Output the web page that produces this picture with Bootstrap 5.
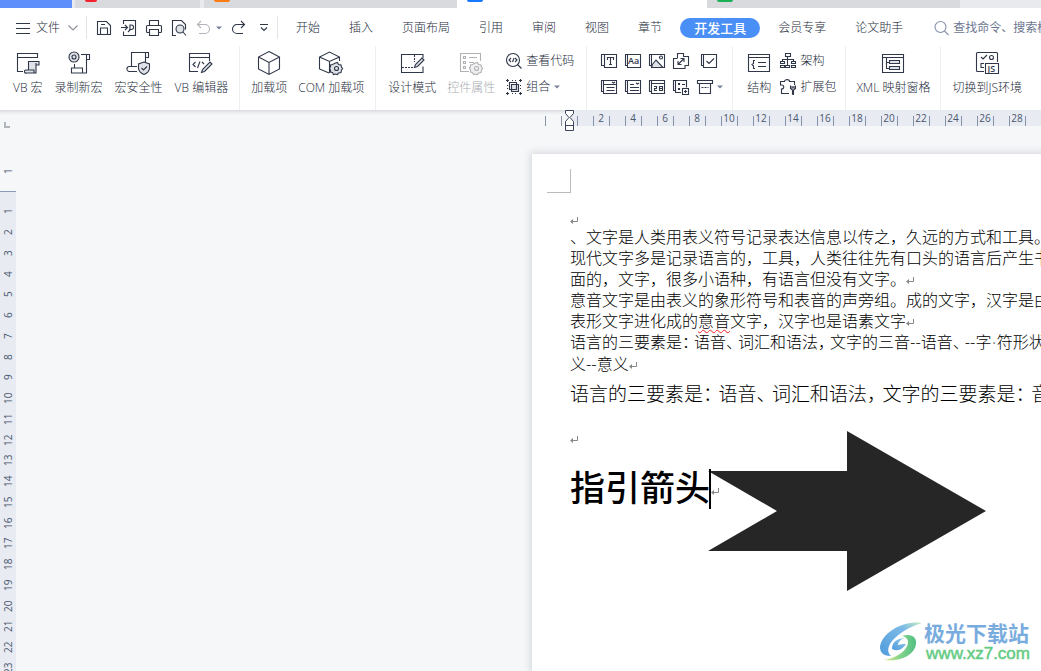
<!DOCTYPE html>
<html lang="zh-CN">
<head>
<meta charset="utf-8">
<meta name="viewport" content="width=device-width, initial-scale=1">
<title>WPS 文字</title>
<link href="https://cdn.jsdelivr.net/npm/bootstrap@5.3.0/dist/css/bootstrap.min.css" rel="stylesheet">
<style>
:root{--ink:#2f3749;--band:#e8ecf2;--desk:#f5f7f9;--line:#e2e4e8}
body{font-family:"Open Sans","Noto Sans CJK SC",sans-serif;font-size:12px;line-height:16px;font-weight:300;color:#262c3c;background:var(--desk);height:100vh}
button{font:inherit;color:inherit;background:none;border:0;padding:0;white-space:nowrap}
svg{display:block;flex:none;overflow:visible}
.ico{fill:none;stroke:var(--ink);stroke-width:1.1}
.ico .fl{fill:#dfe2e7}
.ico text{fill:var(--ink);stroke:none;font-weight:600}
.dim{color:#a8abb1}.dim .ico{stroke:#b0b2b6}.dim .ico .fl{fill:#f0f0f1}
.doc-tabs{height:8px;background:#e9eaed;gap:3px}
.doc-tabs button{background:#d9dade;width:253px;height:8px;padding-left:10px;overflow:hidden}
.doc-tabs .home{background:#5f8ffa;width:72px}
.doc-tabs .short{width:125px;margin-right:1px}
.doc-tabs .current{background:#fff;width:250px;margin:0 -3px}
.app{display:block;width:16px;height:2px;border-radius:0 0 5px 5px;margin-bottom:6px}
.menu-row{height:38px;padding-top:1px}
.quick{gap:9px;padding:0 7px 0 9px}
.bar{width:1px;height:23px;background:var(--line);flex:none}
.menu-tabs{margin-left:3px}
.menu-tabs button{padding:0 14px 0 15px}
.menu-tabs .chosen{background:#4a8ff5;color:#fff;border-radius:10px;height:20px;font-size:13px;font-weight:500;padding:0 14px;margin:0 3px 0 4px}
.finder{border:0;padding:0;outline:0;width:120px;font-size:12px;font-weight:400;color:#6c7690;background:none}
.finder::placeholder{color:#6c7690;opacity:1}
.ribbon{height:64px}
.group{gap:11px;padding:5px 11px 4px;border-right:1px solid #eceef1;flex:none}
.roomy{padding-left:12px;padding-right:12px}
.big{display:flex;flex-direction:column;align-items:center;justify-content:flex-start;gap:5px}
.pair{display:grid;gap:10px;align-content:start}
.pair button{display:flex;align-items:center;gap:4px;height:16px}
.pair{padding-top:2px}
.tools{display:grid;grid-template-columns:repeat(4,16px) auto;gap:10px 8px;align-content:start;padding:2px 0 0 5px}
.tools .end{padding-left:4px}
.side-ruler{width:16px;flex:none;color:#4a566f;font-size:10px;line-height:16px;font-weight:400}
.side-ruler .top-part{height:82px;border-bottom:1px solid #8b9ab5}
.side-ruler .rest{background:var(--band);flex:1;padding-top:9px;overflow:hidden;min-height:0}
.side-ruler span{writing-mode:vertical-rl;transform:rotate(180deg);display:flex;justify-content:center;height:21px;width:16px;flex:none}
.side-ruler span:nth-child(4n){height:20px}
.desk{box-shadow:inset 0 5px 4px -4px #c9ccd1}
.top-ruler{height:16px;margin-left:529px;background:linear-gradient(90deg,transparent 25px,var(--band) 25px);color:#4a566f;font-size:10px;line-height:16px;font-weight:400;overflow:visible}
.top-ruler span{width:16px;flex:none;text-align:center;background:linear-gradient(#8593aa,#8593aa) 0 6px/1px 10px no-repeat}
.indent{left:19px;top:0}
.sheet{margin:28px 0 0 516px;background:#fff;box-shadow:0 0 7px 2px #d9dbde;padding:54px 0 0 38px;min-width:600px;flex:1;color:#000;white-space:nowrap;font-family:"Noto Sans CJK SC",sans-serif}
.sheet p{margin:0;font-size:16px;line-height:21px;font-weight:300}
.sheet .large-text{font-size:19px;line-height:30px;padding-top:4px;margin-bottom:19px}
.sheet h1{margin:12px 0 0;font-size:35px;line-height:52px;font-weight:500}
.nip{font-feature-settings:"halt";margin-right:4px}
.large-text .nip{margin-right:6px}
.gap-dot{font-family:"Liberation Sans",sans-serif;color:#888}
.ret{display:inline-block;width:8px;height:8px;stroke:#888;fill:none}
.typo{text-decoration:underline wavy #e22 1px;text-underline-offset:2px}
.crop{left:15px;top:15px;width:24px;height:24px;border:solid #bbb;border-width:0 1px 1px 0}
.arrow{left:176px;top:277px}
.caret{display:inline-block;width:2px;height:40px;background:#000;vertical-align:-8px;margin-left:-1px}
.brand{right:11px;bottom:8px;gap:2px;font-family:"Noto Sans CJK SC",sans-serif}
.brand b{display:block;font-size:21px;line-height:25px;font-weight:700;color:#79acde}
.brand a{display:block;font:17px/18px "Liberation Sans",sans-serif;color:#65cb83;text-decoration:none;-webkit-text-stroke:.5px #65cb83;padding-left:2px}
</style>
</head>
<body class="d-flex flex-column overflow-hidden position-relative">
<svg width="0" height="0" class="position-absolute" aria-hidden="true">
  <symbol id="ret" viewBox="0 0 8 8"><path d="M7.5 0v4.5H2"/><path d="M0 4.5l3-2.5v5z" fill="#888" stroke="none"/></symbol>
  <symbol id="down" viewBox="0 0 6 4"><path d="M0 .5h6l-3 3z" fill="#77819a" stroke="none"/></symbol>
</svg>

<nav class="doc-tabs d-flex flex-shrink-0" aria-label="文档">
  <button class="home" aria-label="首页"></button>
  <button class="short" aria-label="PDF"><i class="app" style="background:#f5222d;width:12px"></i></button>
  <button aria-label="演示"><i class="app" style="background:#fa7a14"></i></button>
  <button class="current" aria-label="文字"><i class="app" style="background:#1677ff"></i></button>
  <button aria-label="表格"><i class="app" style="background:#1bb155"></i></button>
</nav>

<header class="bg-white flex-shrink-0">
  <div class="menu-row d-flex align-items-center">
    <button class="d-flex align-items-center ps-3 pe-2">
      <svg class="ico me-1" width="16" height="12"><path d="M0 1.500h14M0 6.500h14M0 11.500h14"/></svg>文件
      <svg class="ico ms-2" width="10" height="6" style="stroke:#8a8f99"><path d="M.5 .5l4.500 4.500 4.500-4.500"/></svg>
    </button>
    <span class="bar"></span>
    <div class="quick d-flex align-items-center">
      <button aria-label="保存"><svg class="ico" width="16" height="16"><path d="M1.500 1.500h9l4 4v9h-13zM4.500 14v-6h7v6M5 4.500h4"/></svg></button>
      <button aria-label="输出为PDF"><svg class="ico" width="16" height="16"><path d="M2.500 4V.5h12v15h-12v-4M0 7.500h6M4 5l2.500 2.500L4 10M7 12l2-2V5h1.500a2 2.200 0 0 1 0 4.500H8"/></svg></button>
      <button aria-label="打印"><svg class="ico" width="16" height="16"><path d="M3.500 5V.5h9V5M3.500 12.500H1.500a1 1 0 0 1-1-1v-5a1 1 0 0 1 1-1h13a1 1 0 0 1 1 1v5a1 1 0 0 1-1 1h-2M3.500 9.500h9v6h-9z"/></svg></button>
      <button aria-label="打印预览"><svg class="ico" width="16" height="16"><path d="M5 15.500H1.500V.5h9l4 4v5M12 12l3 3.500"/><circle class="fl" cx="9" cy="9" r="4"/></svg></button>
      <button aria-label="撤销" class="d-flex align-items-center gap-1"><svg class="ico" width="16" height="16" style="stroke:#b0b3b9"><path d="M5 1L1.500 4.500 5 8M2 4.500h7a4.500 4.500 0 0 1 0 9H3"/></svg><svg width="6" height="4"><use href="#down"/></svg></button>
      <button aria-label="恢复"><svg class="ico" width="16" height="16"><path d="M10 1l3.500 3.500L10 8M13 4.500H6a4.500 4.500 0 0 0 0 9h6"/></svg></button>
      <button aria-label="更多" class="ps-1"><svg class="ico" width="10" height="8"><path d="M0 .5h8M1 3.500l3 3 3-3"/></svg></button>
    </div>
    <span class="bar"></span>
    <nav class="menu-tabs d-flex align-items-center">
      <button>开始</button><button>插入</button><button>页面布局</button><button>引用</button><button>审阅</button><button>视图</button><button>章节</button><button class="chosen">开发工具</button><button>会员专享</button><button>论文助手</button>
    </nav>
    <label for="find" class="ms-3"><svg class="ico" width="16" height="16" style="stroke:#8490ac" role="img" aria-label="搜索"><circle cx="7.500" cy="7" r="5.500"/><path d="M11.500 11l4 4"/></svg></label>
    <input id="find" class="finder ms-1" placeholder="查找命令、搜索模板">
  </div>

  <div class="ribbon d-flex">
    <div class="group d-flex" style="padding-left:13px;gap:12px">
      <button class="big"><svg class="ico" width="24" height="24"><path d="M7 20.500H1.500v-18h20V7M1.500 6.500h20"/><path class="fl" d="M12.500 19V10.500h10.500v3.500h-3v8h-9.500a1.500 1.500 0 0 1-1-3h8.500v3M20 14v-2"/></svg><span>VB 宏</span></button>
      <button class="big"><svg class="ico" width="24" height="24"><circle class="fl" cx="7" cy="6" r="5"/><circle class="fl" cx="7" cy="6" r="2"/><path d="M14 3.500h8.500V8.500H19.500v13.500H4.500v-5h11v5M7.500 13v4M19.500 4v4"/></svg><span>录制新宏</span></button>
      <button class="big"><svg class="ico" width="24" height="24"><path d="M10 20.500H3a2 2 0 0 1-1-5h8M4.500 15V1.500h17V6.500H18.500M18.500 2v9"/><path class="fl" d="M17 11l5.500 2v4c0 3-2 5-5.500 6.500-3.500-1.500-5.500-3.500-5.500-6.500v-4z"/><path d="M14.500 17l2 2 3.500-3.500"/></svg><span>宏安全性</span></button>
      <button class="big"><svg class="ico" width="24" height="24"><path d="M9 20.500H.5v-18h20V10M.5 6.500h20M6.500 11L4 13.500 6.500 16M11 10.500L8.500 17M13 11l2 2"/><path class="fl" d="M12.500 21.500l1-3 7.500-7.500 2 2-7.500 7.500z"/></svg><span>VB 编辑器</span></button>
    </div>
    <div class="group d-flex">
      <button class="big"><svg class="ico" width="24" height="24"><path d="M12 .5l10.500 5.500v12L12 23.500 1.500 18V6zM1.500 6L12 11.500 22.500 6M12 11.500v12"/></svg><span>加载项</span></button>
      <button class="big"><svg class="ico" width="24" height="24"><path d="M10 22L.5 18V6L10.500 1l10 5v4M.5 6l10 4.500 10-4.500M10.500 10.500V22"/><path class="fl" d="M16.500 12l2-.5 1 2 2.500.5.500 2 1 1.500-1 1.500-.5 2.500-2.500.5-1 1.500-2-.5-2 .5-1-2-2-.5V19l-1-1.500 1-2V14l2-.5z"/><circle cx="17.500" cy="17.500" r="2"/></svg><span>COM 加载项</span></button>
    </div>
    <div class="group roomy d-flex">
      <button class="big"><svg class="ico" width="24" height="24"><path d="M23 7V3.500H1.500v18H23v-6"/><path d="M2 16.500h13M14.500 4v7" stroke-dasharray="2 1"/><path class="fl" d="M14.500 16.500l1-3L22 7l2 2-6.500 6.500z"/></svg><span>设计模式</span></button>
      <button class="big dim" disabled><svg class="ico" width="24" height="24"><path d="M10 20.500H1.500v-18h20V10M10 6.500h8M10 11.500h5M10 16.500h1"/><path d="M4.500 5.500h2v2h-2zM4.500 10.500h2v2h-2zM4.500 15.500h2v2h-2z"/><path class="fl" d="M16.500 12l2-.5 1 2 2.500.5.500 2 1 1.500-1 1.500-.5 2.500-2.500.5-1 1.500-2-.5-2 .5-1-2-2-.5V19l-1-1.500 1-2V14l2-.5z"/><circle cx="17.500" cy="17.500" r="2"/></svg><span>控件属性</span></button>
      <div class="pair">
        <button><svg class="ico" width="16" height="16"><circle cx="7" cy="7" r="6.500"/><path d="M11.500 11.500l4 4M5 5L3 7l2 2M8 5L6.500 9M9 5l2 2-2 2"/></svg>查看代码</button>
        <button><svg class="ico" width="16" height="16"><path class="fl" d="M5.500 5.500h7v7h-7z"/><path d="M3.500 3.500h7v7h-7z"/><path d="M0 1.500h3M1.500 0v3M13 1.500h3M14.500 0v3M0 14.500h3M1.500 13v3M13 14.500h3M14.500 13v3M6 1.500h1M9 1.500h1M14.500 6v1M14.500 9v1M6 14.500h1M9 14.500h1M1.500 6v1M1.500 9v1"/></svg>组合<svg width="6" height="4"><use href="#down"/></svg></button>
      </div>
    </div>
    <div class="group d-flex" style="padding-left:9px;padding-right:9px">
      <div class="tools">
        <button aria-label="文本框"><svg class="ico" width="16" height="16"><path d="M3.500 1.500h12v13h-12zM3 12.500H.5v-11H3M6.500 7V4.500h6V7M9.500 4.500v7M8 11.500h3"/></svg></button>
        <button aria-label="标签"><svg class="ico" width="16" height="16"><path d="M2.500 1.500h13v13h-13zM3 12.500H.5v-11H3"/><text x="3" y="11" font-size="9">Aa</text></svg></button>
        <button aria-label="图像"><svg class="ico" width="16" height="16"><path d="M2.500 1.500h13v13h-13zM3 12.500H.5v-11H3"/><path class="fl" d="M3 12l4-5 7 7.500H3z"/><circle cx="12" cy="4.500" r="1.500"/></svg></button>
        <button aria-label="滚动框"><svg class="ico" width="16" height="16"><path d="M4.500 5V.5h6v3h5v9H12V15.500H.5V5.500h4"/><path d="M5 11.500l6-6M7.500 5.500H11V9M5 8v3.500h3.500"/></svg></button>
        <button aria-label="复选框" class="end"><svg class="ico" width="16" height="16"><path d="M2.500 1.500h13v13h-13zM3 12.500H.5v-11H3M5.500 8L8 10.500 13 5.500"/></svg></button>
        <button aria-label="组合框"><svg class="ico" width="16" height="16"><path d="M2.500 1.500h13v13h-13zM3 12.500H.5v-11H3M3 5.500h12M5.500 8.500h8M5.500 11.500h8M11 3l1.500 1L14 3"/></svg></button>
        <button aria-label="列表框"><svg class="ico" width="16" height="16"><path d="M2.500 1.500h13v13h-13zM3 12.500H.5v-11H3M5 5.500h4M5 8.500h9M5 11.500h9M11 4l1.500 1L14 4"/></svg></button>
        <button aria-label="日期"><svg class="ico" width="16" height="16"><path d="M2.500 1.500h13v13h-13zM3 12.500H.5v-11H3M3 4.500h12"/><path d="M5 7.500h2.500v2H5.500v2H8M10.500 7.500h3v4h-3zM10.500 9.500h3"/></svg></button>
        <button aria-label="重复节"><svg class="ico" width="16" height="16"><path d="M8 13.500H2.500V1.500h11v7M3 11.500H.5v-10H3M5.500 4.500h1v1h-1zM5.500 9.500h1v1h-1zM9 5.500h3M9.500 9.500h6v6h-6zM12.500 11v3M11 12.500h3"/></svg></button>
        <button aria-label="旧式工具" class="d-flex align-items-center gap-1"><svg class="ico" width="16" height="16"><path d="M.5 1.500h15v3H.5zM2.500 5v9.500h11V5"/><path d="M4.500 8.500h7" stroke-dasharray="2 1"/></svg><svg width="6" height="4"><use href="#down"/></svg></button>
      </div>
    </div>
    <div class="group d-flex" style="padding-left:14px;padding-right:9px;gap:9px">
      <button class="big"><svg class="ico" width="24" height="24"><path d="M1.500 3.500h21v17h-21zM1.500 6.500h21M8 9.500H6.500v3L5 13.500 6.500 15v2.500H8M11 11.500h8M11 15.500h8"/></svg><span>结构</span></button>
      <div class="pair">
        <button><svg class="ico" width="16" height="16"><path d="M5.500 .5h5v3h-5zM7.500 4v8M2.500 8.500v-2h11v2M.5 8.500h4v2h-4zM11.500 8.500h4v2h-4zM.5 12.500h4v2h-4zM5.500 12.500h4v2h-4zM11.500 12.500h4v2h-4z"/></svg>架构</button>
        <button><svg class="ico" width="16" height="16"><path d="M9 14.500H1.500V10c3 0 3-4 0-4H.5V2.500h4c0-2.500 5-2.500 5 0h5V6"/><path class="fl" d="M10.500 6.500v3l2 1.500v4.500M15.500 6.500v3l-2 1.500v4.500h-1M12 7v2h2V7"/></svg>扩展包</button>
      </div>
    </div>
    <div class="group d-flex" style="padding-left:10px;padding-right:10px">
      <button class="big"><svg class="ico" width="24" height="24"><path d="M1.500 3.500h21v18h-21zM1.500 6.500h21M5.500 7v10.500H9M5.500 11.500H9"/><path class="fl" d="M8.500 9.500h10v3h-10zM8.500 15.500h10v3h-10z"/></svg><span>XML 映射窗格</span></button>
    </div>
    <div class="group d-flex border-0" style="padding-left:11px">
      <button class="big"><svg class="ico" width="24" height="24"><path d="M9 20.500H2.500a1 1 0 0 1-1-1V2.500a1 1 0 0 1 1-1h19a1 1 0 0 1 1 1V11M6 6l2 2 4-4M9 12.500H6v4h3M10.500 12.500h13v10h-13z"/><circle cx="16.500" cy="6.500" r="2"/><text x="12.500" y="21" font-size="9">JS</text></svg><span>切换到JS环境</span></button>
    </div>
  </div>
</header>

<main class="desk d-flex flex-grow-1 overflow-hidden">
  <aside class="side-ruler d-flex flex-column">
    <div class="top-part d-flex flex-column justify-content-between align-items-center">
      <svg width="8" height="20"><path d="M1 12v5h5" fill="none" stroke="#b0b4bb" stroke-width="2"/></svg>
      <span style="margin-bottom:9px">1</span>
    </div>
    <div class="rest d-flex flex-column" id="vertical"></div>
  </aside>
  <section class="d-flex flex-column flex-grow-1">
    <div class="top-ruler d-flex position-relative" id="horizontal">
      <svg class="indent position-absolute" width="11" height="22" fill="#fff" stroke="#3b465c"><path d="M1.500 .5h8v3l-3.500 4 3.500 4v4h-8v-4l3.500-4-3.500-4zM1.500 15.500h8v5h-8z"/></svg>
    </div>
    <article class="sheet position-relative">
      <div class="crop position-absolute"></div>
      <p style="margin-bottom:-7px"><svg class="ret"><use href="#ret"/></svg></p>
      <p class="pt-1">、文字是人类用表义符号记录表达信息以传之，久远的方式和工具。</p>
      <p>现代文字多是记录语言的，工具，人类往往先有口头的语言后产生书</p>
      <p>面的，文字，很多小语种，有语言但没有文字。<svg class="ret"><use href="#ret"/></svg></p>
      <p>意音文字是由表义的象形符号和表音的声旁组。成的文字，汉字是由</p>
      <p>表形文字进化成的<span class="typo">意音</span>文字，汉字也是语素文字<svg class="ret"><use href="#ret"/></svg></p>
      <p>语言的三要素是<span class="nip">：</span>语音<span class="nip">、</span>词汇和语法<span class="nip">，</span>文字的三音--语音<span class="nip">、</span>--字<span class="gap-dot">·</span>符形状</p>
      <p>义--意义<svg class="ret"><use href="#ret"/></svg></p>
      <p class="large-text">语言的三要素是<span class="nip">：</span>语音<span class="nip">、</span>词汇和语法<span class="nip">，</span>文字的三要素是<span class="nip">：</span>音</p>
      <p><svg class="ret"><use href="#ret"/></svg></p>
      <svg class="arrow position-absolute" width="278" height="160" fill="#262626"><path d="M139 0l139 80-139 80v-40H0l69-40L0 40h139z"/></svg>
      <h1 class="position-relative">指引箭头<span class="caret"></span><svg class="ret"><use href="#ret"/></svg></h1>
    </article>
  </section>
</main>

<div class="brand position-absolute d-flex align-items-center">
  <svg width="42" height="42" viewBox="0 0 42 42">
    <defs><linearGradient id="sky" x1="0" y1="1" x2="1" y2="0"><stop stop-color="#4f9bdc"/><stop offset=".7" stop-color="#7dbbe8"/><stop offset="1" stop-color="#c8eec0"/></linearGradient><linearGradient id="leaf"><stop stop-color="#e4ec93"/><stop offset=".5" stop-color="#83d48a"/><stop offset="1" stop-color="#53bf84"/></linearGradient></defs>
    <path fill="url(#sky)" d="M42 2C26-1 2 10 0 26c0 6 4 9 11 9-5-4-3-12 4-18C22 10 32 5 42 2z"/>
    <path fill="url(#leaf)" d="M4 39c13 2 30-3 32-16 1-6-4-11-14-8 6 1 8 6 4 12-4 6-12 10-22 12z"/>
    <path fill="url(#sky)" d="M12 28c0-7 5-11 14-11-5 1-8 4-8 7 3-1 5-1 8-1-3 5-8 8-14 5z"/>
  </svg>
  <div><b>极光下载站</b><a href="#">www.xz7.com</a></div>
</div>

<script src="https://cdn.jsdelivr.net/npm/bootstrap@5.3.0/dist/js/bootstrap.bundle.min.js"></script>
<script>
function addMark(parent, text) {
  const mark = document.createElement('span');
  mark.textContent = text;
  parent.append(mark);
}
const horizontal = document.getElementById('horizontal');
for (let n = -1; n <= 29; n++) addMark(horizontal, n > 0 && n % 2 === 0 ? n : '');
const vertical = document.getElementById('vertical');
for (let n = 1; n <= 23; n++) addMark(vertical, n);
</script>
</body>
</html>
